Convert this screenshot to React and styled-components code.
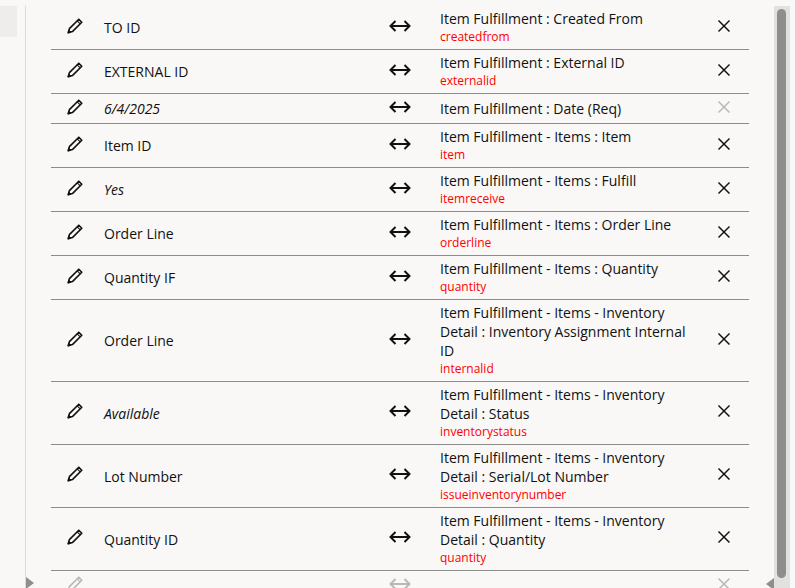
import React from "react";
import styled, { createGlobalStyle } from "styled-components";

const GlobalStyle = createGlobalStyle`
    html, body {
        margin: 0;
        height: 100%;
        overflow: hidden;
        background-color: #f9f8f6;
        font-family: "Open Sans", "Liberation Sans", sans-serif;
    }
`;

const Page = styled.div`
    position: relative;
    display: flex;
    width: 795px;
    height: 588px;
    padding-top: 6px;
    box-sizing: border-box;
    overflow: hidden;
`;

const SideTab = styled.div`
    flex: none;
    width: 17px;
    height: 31px;
    background-color: #eeedeb;
`;

const Main = styled.div`
    flex: none;
    width: 749px;
    margin-left: 8px;
    padding: 0 25px 0 25px;
    box-sizing: border-box;
    border-left: 1px solid #dcdbd9;
`;

const Row = styled.div`
    display: grid;
    grid-template-columns: 53px 276px 40px 279px 1fr;
    align-items: center;
    min-height: 22px;
    padding: 3px 0 4px;
    border-bottom: ${({ $last }) => ($last ? "none" : "1px solid #8c8c8a")};
    color: ${({ $faded }) => ($faded ? "#b9b8b6" : "#111111")};
`;

const IconCell = styled.div`
    display: flex;
    justify-content: center;
    align-items: center;
    height: 18px;
    margin-top: -3px;
`;

const PencilCell = styled(IconCell)`
    justify-content: flex-start;
    padding-left: 15px;
`;

const CloseCell = styled(IconCell)`
    color: ${({ $faded }) => ($faded ? "#b9b8b6" : "#111111")};
`;

const Label = styled.div`
    font-size: 14px;
    line-height: 19px;
    color: #111111;
    font-style: ${({ $italic }) => ($italic ? "italic" : "normal")};
    margin-top: 1px;
`;

const Target = styled.div`
    padding: 0 4px 0 20px;
`;

const FieldName = styled.div`
    font-size: 14px;
    line-height: 19px;
    color: #111111;
`;

const FieldId = styled.div`
    font-size: 12px;
    line-height: 17px;
    color: #ff0000;
`;

const Scrollbar = styled.div`
    position: absolute;
    top: 6px;
    right: 5px;
    bottom: 0;
    width: 16px;
    background-color: #e2e1df;
`;

const Thumb = styled.div`
    position: absolute;
    top: 3px;
    left: 3px;
    width: 9px;
    height: 569px;
    border-radius: 5px;
    background-color: #8e8e8e;
`;

const Corner = styled.div`
    position: absolute;
    width: 0;
    height: 0;
    border-top: 6px solid transparent;
    border-bottom: 6px solid transparent;
`;

const CornerLeft = styled(Corner)`
    left: 26px;
    bottom: -1px;
    border-left: 8px solid #8e8e8e;
`;

const CornerRight = styled(Corner)`
    left: 766px;
    bottom: -2px;
    border-right: 8px solid #8e8e8e;
`;

const Pencil = () => (
    <svg width="18" height="18" viewBox="0 0 18 18" fill="none" stroke="currentColor">
        <path d="M2.2 15.8 L3.4 11.6 L12.8 2.2 L15.8 5.2 L6.4 14.6 Z" strokeWidth="1.6" strokeLinejoin="round" />
        <path d="M11.2 3.8 L14.2 6.8" strokeWidth="1.1" />
        <path d="M2 16 L2.8 13 L5 15.2 Z" fill="currentColor" strokeWidth="0.8" />
    </svg>
);

const Arrows = () => (
    <svg width="22" height="14" viewBox="0 0 22 14" fill="none" stroke="currentColor" strokeWidth="2">
        <path d="M1.5 7 H20.5" />
        <path d="M6.5 2 L1.5 7 L6.5 12" />
        <path d="M15.5 2 L20.5 7 L15.5 12" />
    </svg>
);

const Cross = () => (
    <svg width="14" height="14" viewBox="0 0 14 14" fill="none" stroke="currentColor" strokeWidth="1.5">
        <path d="M1.5 1.5 L12.5 12.5" />
        <path d="M12.5 1.5 L1.5 12.5" />
    </svg>
);

const mappings = [
    { label: "TO ID", name: "Item Fulfillment : Created From", id: "createdfrom" },
    { label: "EXTERNAL ID", name: "Item Fulfillment : External ID", id: "externalid" },
    { label: "6/4/2025", italic: true, name: "Item Fulfillment : Date (Req)", locked: true },
    { label: "Item ID", name: "Item Fulfillment - Items : Item", id: "item" },
    { label: "Yes", italic: true, name: "Item Fulfillment - Items : Fulfill", id: "itemreceive" },
    { label: "Order Line", name: "Item Fulfillment - Items : Order Line", id: "orderline" },
    { label: "Quantity IF", name: "Item Fulfillment - Items : Quantity", id: "quantity" },
    {
        label: "Order Line",
        name: "Item Fulfillment - Items - Inventory Detail : Inventory Assignment Internal ID",
        id: "internalid",
    },
    {
        label: "Available",
        italic: true,
        name: "Item Fulfillment - Items - Inventory Detail : Status",
        id: "inventorystatus",
    },
    {
        label: "Lot Number",
        name: "Item Fulfillment - Items - Inventory Detail : Serial/Lot Number",
        id: "issueinventorynumber",
    },
    {
        label: "Quantity ID",
        name: "Item Fulfillment - Items - Inventory Detail : Quantity",
        id: "quantity",
    },
];

const App = () => (
    <Page>
        <GlobalStyle />
        <SideTab />
        <Main>
            {mappings.map((m, i) => (
                <Row key={i}>
                    <PencilCell><Pencil /></PencilCell>
                    <Label $italic={m.italic}>{m.label}</Label>
                    <IconCell><Arrows /></IconCell>
                    <Target>
                        <FieldName>{m.name}</FieldName>
                        {m.id && <FieldId>{m.id}</FieldId>}
                    </Target>
                    <CloseCell $faded={m.locked}><Cross /></CloseCell>
                </Row>
            ))}
            <Row $faded $last>
                <PencilCell><Pencil /></PencilCell>
                <Label />
                <IconCell><Arrows /></IconCell>
                <Target />
                <CloseCell $faded><Cross /></CloseCell>
            </Row>
        </Main>
        <Scrollbar>
            <Thumb />
        </Scrollbar>
        <CornerLeft />
        <CornerRight />
    </Page>
);

export default App;
